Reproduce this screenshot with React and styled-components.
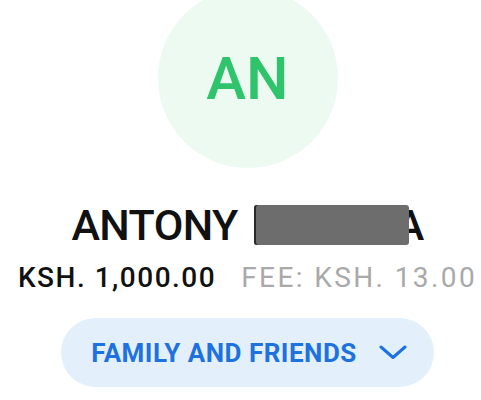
import React from 'react';
import styled, { createGlobalStyle } from "styled-components";

const GlobalStyle = createGlobalStyle`
    body {
        margin: 0;
        background: #ffffff;
        font-family: Roboto, "Liberation Sans", sans-serif;
    }
`;

const Container = styled.div`
    display: flex;
    flex-direction: column;
    align-items: center;
    padding-left: 14px;
    height: 400px;
    overflow: hidden;
`;

const Avatar = styled.div`
    width: 180px;
    height: 180px;
    margin-top: -12px;
    border-radius: 50%;
    background: #edfaf2;
    display: flex;
    align-items: center;
    justify-content: center;
    color: #2fc46b;
    font-size: 60px;
    font-weight: 500;
`;

const Name = styled.div`
    margin-top: 32px;
    font-size: 43px;
    line-height: 50px;
    font-weight: 500;
    letter-spacing: -0.6px;
    color: #111;
    white-space: nowrap;
    display: flex;
    align-items: center;
`;

const Redacted = styled.span`
    position: relative;
    z-index: 1;
    display: inline-block;
    width: 155px;
    height: 40px;
    margin: 0 -13px 0 16px;
    background: #6d6d6d;
    border-radius: 3px;
    box-shadow: 2px 0 0 #2a2a2a inset;
`;

const AmountRow = styled.div`
    margin-top: 13px;
    display: flex;
    align-items: baseline;
    gap: 25px;
    font-size: 28px;
    line-height: 30px;
    white-space: nowrap;
`;

const Amount = styled.span`
    color: #111;
    font-weight: 500;
    letter-spacing: 1.5px;
`;

const Fee = styled.span`
    color: #a9a9a9;
    font-weight: 400;
    letter-spacing: 2.4px;
`;

const CategoryButton = styled.button`
    margin-top: 25px;
    height: 69px;
    padding: 0 27px 0 30px;
    border: none;
    border-radius: 35px;
    background: #e3f0fc;
    color: #1d72df;
    font-family: Roboto, "Liberation Sans", sans-serif;
    font-size: 26px;
    font-weight: 700;
    letter-spacing: 0.5px;
    display: flex;
    align-items: center;
    gap: 22px;
    white-space: nowrap;
`;

function Chevron() {
    return (
        <svg width="28" height="15" viewBox="0 0 28 15" fill="none">
            <path d="M2 2 L14 12.5 L26 2" stroke="#1d72df" strokeWidth="3" strokeLinecap="round" strokeLinejoin="round" />
        </svg>
    );
}

export default function App() {
    return (
        <Container>
            <GlobalStyle />
            <Avatar>AN</Avatar>
            <Name>ANTONY<Redacted />A</Name>
            <AmountRow>
                <Amount>KSH. 1,000.00</Amount>
                <Fee>FEE: KSH. 13.00</Fee>
            </AmountRow>
            <CategoryButton>
                FAMILY AND FRIENDS
                <Chevron />
            </CategoryButton>
        </Container>
    );
}
